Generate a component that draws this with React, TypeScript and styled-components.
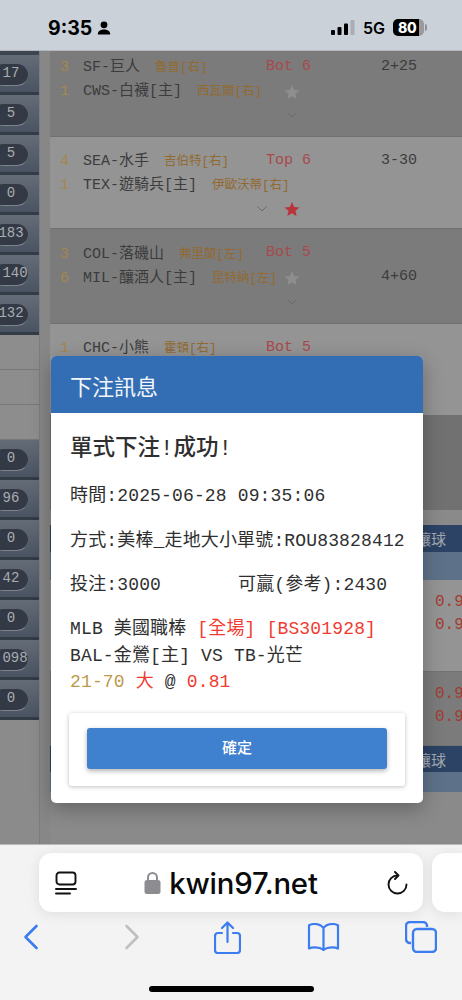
import React from "react";
import styled, { createGlobalStyle } from "styled-components";

const Global = createGlobalStyle`
  html, body { margin: 0; padding: 0; background: #f3f3f4; }
  * { box-sizing: border-box; }
`;

const mono = `"Liberation Mono", "Noto Sans CJK TC", monospace`;

const Phone = styled.div`
  position: relative;
  width: 462px;
  height: 1000px;
  overflow: hidden;
  display: flex;
  flex-direction: column;
  background: #f3f3f4;
`;

const StatusBar = styled.div`
  height: 51px;
  flex: none;
  background: #cbd1d9;
  border-bottom: 1px solid #b4b8bd;
  display: flex;
  align-items: center;
  justify-content: space-between;
  padding: 5px 38px 0 48px;
  color: #000;
  font-family: Inter, sans-serif;
`;
const StatusLeft = styled.div`
  display: flex;
  align-items: center;
  gap: 5px;
  font-size: 19.5px;
  font-weight: 700;
`;
const StatusRight = styled.div`
  display: flex;
  align-items: center;
  gap: 8px;
  font-size: 16px;
  font-weight: 600;
`;
const Battery = styled.div`
  position: relative;
  width: 31px;
  height: 17px;
  border-radius: 5px;
  background: linear-gradient(90deg, #000 0 83%, #9a9a9e 83% 100%);
  color: #fff;
  font-size: 14px;
  font-weight: 800;
  line-height: 17px;
  padding-left: 5px;
  letter-spacing: -0.3px;
  &::after {
    content: "";
    position: absolute;
    right: -3px;
    top: 5px;
    width: 2px;
    height: 7px;
    background: #8f9296;
    border-radius: 0 2px 2px 0;
  }
`;

const Web = styled.div`
  position: relative;
  height: 793px;
  flex: none;
  display: flex;
  background: #888;
  overflow: hidden;
`;
const Side = styled.div`
  width: 39px;
  flex: none;
  display: flex;
  flex-direction: column;
  background: #8b8b8b;
`;
const SideCap = styled.div`
  height: 4px;
  flex: none;
  background: #3d4551;
`;
const SideItem = styled.div`
  height: 40px;
  flex: none;
  display: flex;
  align-items: center;
  padding-top: 3px;
  background: linear-gradient(#636c77, #4a5361);
  border-bottom: 3px solid #333b47;
  overflow: hidden;
`;
const Pill = styled.div<{ $shift?: number }>`
  width: 36px;
  height: 22px;
  margin-left: -8px;
  padding-left: ${p => p.$shift ?? 2}px;
  flex: none;
  border-radius: 11px;
  background: #333a45;
  border-bottom: 1px solid #7d848d;
  color: #a9adb2;
  font: 14px/18px ${mono};
  text-align: center;
  white-space: nowrap;
`;
const SideEmpty = styled.div`
  height: 35px;
  flex: none;
  background: #8d8d8d;
  border-bottom: 1px solid #777;
`;
const Track = styled.div`
  width: 11px;
  flex: none;
  background: #878787;
  border-left: 1px solid #7c7c7c;
`;
const Main = styled.div`
  flex: 1;
  display: flex;
  flex-direction: column;
  min-width: 0;
`;
const Game = styled.div<{ $dark?: boolean; $h: number; $pad: number }>`
  position: relative;
  height: ${p => p.$h}px;
  flex: none;
  background: ${p => (p.$dark ? "#7b7b7b" : "#949494")};
  border-bottom: 1px solid #717171;
  padding-top: ${p => p.$pad}px;
  padding-left: 10px;
  display: flex;
  flex-direction: column;
  gap: 4px;
`;
const GameLine = styled.div`
  height: 20px;
  display: grid;
  grid-template-columns: 23px 1fr;
  align-items: center;
  font: 15px/20px ${mono};
  color: #3c3c3c;
  white-space: nowrap;
`;
const Seed = styled.span`
  color: #a3874f;
`;
const Pitcher = styled.span`
  color: #926a31;
  font-size: 12.5px;
  margin-left: 15px;
`;
const Inning = styled.span<{ $top: number }>`
  position: absolute;
  left: 216px;
  top: ${p => p.$top}px;
  color: #a8494c;
  font: 15px/20px ${mono};
`;
const Score = styled.span<{ $top: number }>`
  position: absolute;
  left: 331px;
  top: ${p => p.$top}px;
  color: #3c3c3c;
  font: 15px/20px ${mono};
`;
const Star = styled.svg<{ $x: number; $y: number }>`
  position: absolute;
  left: ${p => p.$x}px;
  top: ${p => p.$y}px;
`;
const Chevron = styled.svg<{ $x: number; $y: number }>`
  position: absolute;
  left: ${p => p.$x}px;
  top: ${p => p.$y}px;
`;
const Plain = styled.div<{ $h: number; $dark?: boolean }>`
  height: ${p => p.$h}px;
  flex: none;
  background: ${p => (p.$dark ? "#717171" : "#8a8a8a")};
`;
const Head = styled.div<{ $h: number }>`
  height: ${p => p.$h}px;
  flex: none;
  background: #2c4365;
  color: #a3a9b2;
  font: 15px "Noto Sans CJK TC", sans-serif;
  display: flex;
  align-items: center;
  justify-content: flex-end;
  padding-right: 16px;
  white-space: nowrap;
`;
const SubHead = styled.div<{ $h: number }>`
  height: ${p => p.$h}px;
  flex: none;
  background: #5d7289;
`;
const Odds = styled.div<{ $dark?: boolean; $h: number }>`
  height: ${p => p.$h}px;
  flex: none;
  background: ${p => (p.$dark ? "#7b7b7b" : "#949494")};
  border-bottom: 1px solid #737373;
  padding: 11px 0 0 385px;
  overflow: hidden;
  color: #a23c33;
  font: 16px/22.500px ${mono};
  white-space: nowrap;
`;

const Modal = styled.div`
  position: absolute;
  left: 51px;
  top: 305px;
  width: 372px;
  background: #fff;
  border-radius: 5px;
  box-shadow: 0 6px 20px rgba(0, 0, 0, 0.28);
  overflow: hidden;
`;
const ModalHead = styled.div`
  height: 57px;
  background: #336eb4;
  color: #f2f5fa;
  font: 22px "Noto Sans CJK TC", sans-serif;
  display: flex;
  align-items: center;
  padding-left: 19px;
`;
const ModalBody = styled.div`
  padding: 21px 19px 0;
  color: #2f2f2f;
`;
const Title = styled.div`
  font: 500 22.500px/30px ${mono};
  height: 30px;
  margin-bottom: 21px;
`;
const Info = styled.div`
  font: 18px/22px ${mono};
  letter-spacing: 0.15px;
  height: 22px;
  margin-bottom: 22.500px;
  white-space: nowrap;
`;
const Bet = styled.div`
  display: flex;
  font: 18px/22px ${mono};
  letter-spacing: 0.15px;
  white-space: nowrap;
  height: 22px;
  margin-bottom: 20px;
`;
const BetCol = styled.span`
  width: 168px;
`;
const Detail = styled.div`
  font: 18px/26.500px ${mono};
  letter-spacing: 0.15px;
  height: 26.500px;
  white-space: nowrap;
`;
const Red = styled.span`
  color: #f23a30;
`;
const Gold = styled.span`
  color: #bd9a4a;
`;
const Card = styled.div`
  margin: 17px 18px 17px 18px;
  height: 73px;
  background: #fff;
  border-radius: 3px;
  box-shadow: 0 1px 4px rgba(0, 0, 0, 0.25);
  padding: 15px 18px 0;
`;
const Confirm = styled.button`
  display: block;
  width: 300px;
  height: 41px;
  padding: 0 0 3px;
  border: 0;
  border-radius: 3px;
  background: #3f80cf;
  box-shadow: 0 2px 5px rgba(0, 0, 0, 0.3);
  color: #fff;
  font: 500 15px "Noto Sans CJK TC", sans-serif;
`;

const Safari = styled.div`
  flex: 1;
  position: relative;
  background: #f3f3f4;
  border-top: 1px solid #b9b9b9;
  display: flex;
  flex-direction: column;
`;
const UrlRow = styled.div`
  display: flex;
  gap: 9px;
  padding: 8px 0 0 39px;
`;
const UrlBar = styled.div`
  width: 384px;
  height: 59px;
  flex: none;
  background: #fff;
  border-radius: 13px;
  box-shadow: 0 2px 14px rgba(0, 0, 0, 0.09);
  display: flex;
  align-items: center;
  justify-content: space-between;
  padding: 0 15px 0 16px;
`;
const NextBar = styled.div`
  flex: 1;
  height: 59px;
  background: #fff;
  border-radius: 13px 0 0 13px;
  box-shadow: 0 2px 14px rgba(0, 0, 0, 0.09);
`;
const Domain = styled.div`
  display: flex;
  align-items: center;
  gap: 8px;
  margin-left: -2px;
  padding-top: 1px;
  color: #0a0a0a;
  font: 500 29.300px Inter, Roboto, sans-serif;
  letter-spacing: -0.2px;
`;
const Tools = styled.div`
  display: flex;
  align-items: center;
  height: 36px;
  margin-top: 7px;
  padding-left: 23px;
`;
const ToolSlot = styled.div<{ $gap?: number }>`
  display: flex;
  margin-left: ${p => p.$gap ?? 0}px;
`;
const HomeBar = styled.div`
  position: absolute;
  left: 149px;
  bottom: 8px;
  width: 165px;
  height: 6px;
  border-radius: 3px;
  background: #000;
`;

const star = (x: number, y: number, c: string) => (
  <Star $x={x} $y={y} width="16" height="16" viewBox="0 0 24 24" fill={c}>
    <path d="M12 1.5l3.2 7.4 8 .7-6.1 5.3 1.9 7.9L12 18.5l-7 4.1 1.9-7.9L.8 9.6l8-.7z" />
  </Star>
);
const chev = (x: number, y: number) => (
  <Chevron $x={x} $y={y} width="12" height="8" viewBox="0 0 12 8" fill="none" stroke="#6a6a6a" strokeWidth="1">
    <path d="M1.5 1.5L6 6l4.5-4.5" />
  </Chevron>
);

const pills: [string, number?][] = [["17"], ["5"], ["5"], ["0"], ["183"], ["140", 10], ["132"]];
const pills2: [string, number?][] = [["0"], ["96"], ["0"], ["42"], ["0"], ["098", 10], ["0"]];

export default function App() {
  return (
    <Phone>
      <Global />
      <StatusBar>
        <StatusLeft>
          9:35
          <svg width="14" height="14" viewBox="0 0 14 14" fill="#000">
            <circle cx="7" cy="3.800" r="3.400" />
            <path d="M0.800 13.500c0-3.600 2.700-5 6.200-5s6.200 1.400 6.200 5z" />
          </svg>
        </StatusLeft>
        <StatusRight>
          <svg width="24" height="15" viewBox="0 0 24 15">
            <rect x="0" y="10" width="4" height="5" rx="1" fill="#000" />
            <rect x="6.500" y="7" width="4" height="8" rx="1" fill="#000" />
            <rect x="13" y="3.500" width="4" height="11.500" rx="1" fill="#000" />
            <rect x="19.500" y="0" width="4" height="15" rx="1" fill="#a9adb3" />
          </svg>
          5G
          <Battery>80</Battery>
        </StatusRight>
      </StatusBar>
      <Web>
        <Side>
          <SideCap />
          {pills.map(([t, s], i) => (
            <SideItem key={i}>
              <Pill $shift={s}>{t}</Pill>
            </SideItem>
          ))}
          <SideEmpty />
          <SideEmpty />
          <SideEmpty />
          {pills2.map(([t, s], i) => (
            <SideItem key={i}>
              <Pill $shift={s}>{t}</Pill>
            </SideItem>
          ))}
        </Side>
        <Track />
        <Main>
          <Game $dark $h={86} $pad={7}>
            <GameLine><Seed>3</Seed><span>SF-巨人<Pitcher>魯普[右]</Pitcher></span></GameLine>
            <GameLine><Seed>1</Seed><span>CWS-白襪[主]<Pitcher>西瓦爾[右]</Pitcher></span></GameLine>
            <Inning $top={6}>Bot 6</Inning>
            <Score $top={6}>2+25</Score>
            {star(234, 33, "#8e8e8e")}
            {chev(236, 60)}
          </Game>
          <Game $h={92} $pad={15}>
            <GameLine><Seed>4</Seed><span>SEA-水手<Pitcher>吉伯特[右]</Pitcher></span></GameLine>
            <GameLine><Seed>1</Seed><span>TEX-遊騎兵[主]<Pitcher>伊歐沃蒂[右]</Pitcher></span></GameLine>
            <Inning $top={14}>Top 6</Inning>
            <Score $top={14}>3-30</Score>
            {chev(206, 68)}
            {star(234, 64, "#b8333a")}
          </Game>
          <Game $dark $h={95} $pad={16}>
            <GameLine><Seed>3</Seed><span>COL-落磯山<Pitcher>弗里蘭[左]</Pitcher></span></GameLine>
            <GameLine><Seed>6</Seed><span>MIL-釀酒人[主]<Pitcher>昆特納[左]</Pitcher></span></GameLine>
            <Inning $top={14}>Bot 5</Inning>
            <Score $top={38}>4+60</Score>
            {star(234, 41, "#8e8e8e")}
            {chev(236, 69)}
          </Game>
          <Game $h={92} $pad={15}>
            <GameLine><Seed>1</Seed><span>CHC-小熊<Pitcher>霍頓[右]</Pitcher></span></GameLine>
            <Inning $top={14}>Bot 5</Inning>
          </Game>
          <Plain $dark $h={94} />
          <Plain $h={15} />
          <Head $h={27}>讓球</Head>
          <SubHead $h={28} />
          <Odds $h={92}>
            0.9<br />0.9
          </Odds>
          <Odds $dark $h={74}>
            0.9<br />0.9
          </Odds>
          <Head $h={26}>讓球</Head>
          <SubHead $h={20} />
          <Plain $h={52} />
        </Main>
        <Modal>
          <ModalHead>下注訊息</ModalHead>
          <ModalBody>
            <Title>單式下注!成功!</Title>
            <Info>時間:2025-06-28 09:35:06</Info>
            <Info>方式:美棒_走地大小單號:ROU83828412</Info>
            <Bet><BetCol>投注:3000</BetCol><span>可贏(參考):2430</span></Bet>
            <Detail>MLB 美國職棒 <Red>[全場] [BS301928]</Red></Detail>
            <Detail>BAL-金鶯[主] VS TB-光芒</Detail>
            <Detail><Gold>21-70</Gold> <Red>大</Red> @ <Red>0.81</Red></Detail>
          </ModalBody>
          <Card><Confirm>確定</Confirm></Card>
        </Modal>
      </Web>
      <Safari>
        <UrlRow>
          <UrlBar>
            <svg width="22" height="24" viewBox="0 0 22 24" fill="none" stroke="#111" strokeWidth="1.900" strokeLinecap="round">
              <rect x="1.500" y="1.500" width="19" height="12" rx="3" />
              <path d="M1 18h20M1 22.500h14" />
            </svg>
            <Domain>
              <svg width="17" height="24" viewBox="0 0 17 24">
                <rect x="0.500" y="9" width="16" height="14" rx="2.500" fill="#8d8d91" />
                <path d="M4 10V6.500a4.500 4.500 0 0 1 9 0V10" fill="none" stroke="#8d8d91" strokeWidth="2" />
              </svg>
              kwin97.net
            </Domain>
            <svg width="21" height="24" viewBox="0 0 21 24" fill="none" stroke="#111" strokeWidth="1.900" strokeLinecap="round" strokeLinejoin="round">
              <path d="M10.500 4.500a9 9 0 1 0 9 9" />
              <path d="M8 1l3.500 3.500L8 8" />
            </svg>
          </UrlBar>
          <NextBar />
        </UrlRow>
        <Tools>
          <ToolSlot>
            <svg width="16" height="26" viewBox="0 0 16 26" fill="none" stroke="#3b7df0" strokeWidth="2.600" strokeLinecap="round" strokeLinejoin="round">
              <path d="M13.500 2L2.500 13l11 11" />
            </svg>
          </ToolSlot>
          <ToolSlot $gap={85}>
            <svg width="16" height="26" viewBox="0 0 16 26" fill="none" stroke="#c0c0c2" strokeWidth="2.600" strokeLinecap="round" strokeLinejoin="round">
              <path d="M2.500 2l11 11-11 11" />
            </svg>
          </ToolSlot>
          <ToolSlot $gap={74}>
            <svg width="27" height="33" viewBox="0 0 27 33" fill="none" stroke="#3b7df0" strokeWidth="2.200" strokeLinecap="round" strokeLinejoin="round">
              <path d="M8 12H4a3 3 0 0 0-3 3v14a3 3 0 0 0 3 3h19a3 3 0 0 0 3-3V15a3 3 0 0 0-3-3h-4" />
              <path d="M13.500 21V2M8 7l5.500-5.500L19 7" />
            </svg>
          </ToolSlot>
          <ToolSlot $gap={66}>
            <svg width="33" height="28" viewBox="0 0 33 28" fill="none" stroke="#3b7df0" strokeWidth="2.200" strokeLinecap="round" strokeLinejoin="round">
              <path d="M16.500 5c-2-2.500-5-4-9-4-2 0-4 .5-5.500 1.200V25.500c1.500-.8 3.500-1.200 5.500-1.200 4 0 7 1 9 2.700 2-1.700 5-2.700 9-2.700 2 0 4 .4 5.500 1.200V2.200C29.500 1.500 27.500 1 25.500 1c-4 0-7 1.500-9 4zM16.500 5v22" />
            </svg>
          </ToolSlot>
          <ToolSlot $gap={65}>
            <svg width="32" height="32" viewBox="0 0 32 32" fill="none" stroke="#3b7df0" strokeWidth="2.400" strokeLinejoin="round">
              <path d="M6 22H5a4 4 0 0 1-4-4V5a4 4 0 0 1 4-4h13a4 4 0 0 1 4 4v1" />
              <rect x="8" y="8" width="23" height="23" rx="4" />
            </svg>
          </ToolSlot>
        </Tools>
        <HomeBar />
      </Safari>
    </Phone>
  );
}
